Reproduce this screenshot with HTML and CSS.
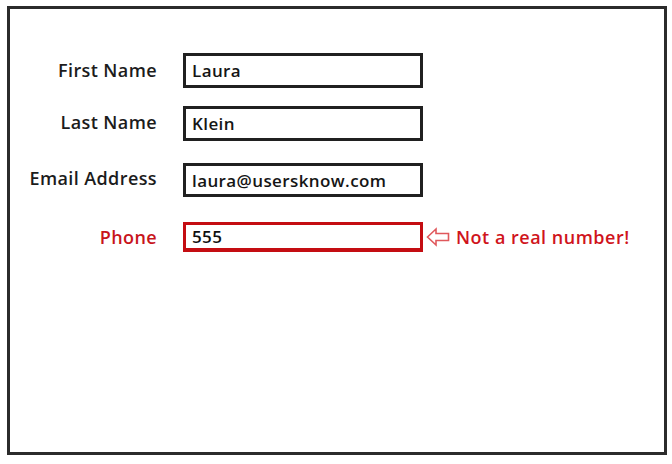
FILE: index.html
```html
<!DOCTYPE html>
<html>
<head>
<meta charset="utf-8">
<link rel="stylesheet" href="styles.css">
</head>
<body>
<div class="frame">
  <div class="form">
    <div class="row r1">
      <div class="label">First Name</div>
      <div class="field">Laura</div>
    </div>
    <div class="row r2">
      <div class="label">Last Name</div>
      <div class="field">Klein</div>
    </div>
    <div class="row r3">
      <div class="label">Email Address</div>
      <div class="field">laura@usersknow.com</div>
    </div>
    <div class="row r4">
      <div class="label error">Phone</div>
      <div class="field field-error">555</div>
      <div class="hint">
        <svg class="arrow" width="24" height="20" viewBox="0 0 24 20">
          <path d="M1.5 10 L10 2 L10 6.5 L22.5 6.5 L22.5 13.5 L10 13.5 L10 18 Z" fill="none" stroke="#e0585c" stroke-width="1.6" stroke-linejoin="miter"/>
        </svg>
        <span class="msg">Not a real number!</span>
      </div>
    </div>
  </div>
</div>
</body>
</html>
```

FILE: styles.css
```css
html, body {
  margin: 0;
  padding: 0;
  background: #ffffff;
}
body {
  width: 672px;
  height: 464px;
  font-family: "Comic Sans MS", "Open Sans", "DejaVu Sans", sans-serif;
  font-weight: 600;
  color: #1c1c1c;
}
.frame {
  box-sizing: border-box;
  margin: 6px 0 0 7px;
  width: 660px;
  height: 449px;
  border: 3px solid #2b2b2b;
  background: #fff;
}
.form {
  padding-top: 44px;
  display: flex;
  flex-direction: column;
}
.row {
  display: flex;
  align-items: center;
}
.r2 { margin-top: 18px; }
.r3 { margin-top: 22px; }
.r4 { margin-top: 25px; }
.label {
  width: 147px;
  text-align: right;
  font-size: 18px;
  letter-spacing: 0.4px;
  margin-right: 26px;
  white-space: nowrap;
}
.r1 .label { margin-top: -2px; }
.r2 .label { margin-top: -3px; }
.r3 .label { margin-top: -4px; }
.label.error {
  color: #c8141b;
}
.field {
  box-sizing: border-box;
  width: 240px;
  height: 35px;
  border: 3px solid #202020;
  padding-left: 6px;
  font-size: 17px;
  letter-spacing: 0.4px;
  display: flex;
  align-items: center;
  color: #151515;
}
.r3 .field { height: 34px; }
.field-error {
  height: 30px;
  border: 3px solid #c40d12;
  border-bottom-width: 4px;
  color: #101010;
}
.hint {
  display: flex;
  align-items: center;
  margin-left: 3px;
}
.arrow {
  display: block;
}
.msg {
  margin-left: 6px;
  color: #d0141c;
  font-size: 18px;
  letter-spacing: 0.5px;
}
```
